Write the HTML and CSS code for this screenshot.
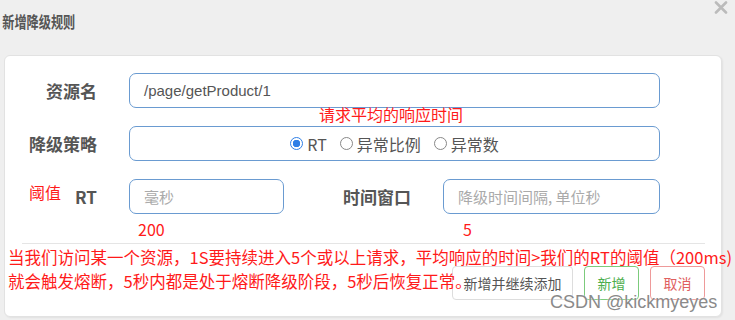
FILE: index.html
```html
<!DOCTYPE html>
<html lang="zh-CN">
<head>
    <meta charset="UTF-8">
    <title>新增降级规则</title>
    <link rel="stylesheet" href="styles.css">
</head>
<body>
    <div class="dialog">
        <div class="dialog-head">
            <h1>新增降级规则</h1>
            <svg class="close" width="14" height="13" viewBox="0 0 14 13">
                <path d="M2 1.5 L12 11.5 M12 1.5 L2 11.5" stroke="#bbb" stroke-width="2.6" stroke-linecap="round"/>
            </svg>
        </div>

        <div class="panel">
            <div class="form-row">
                <label class="label">资源名</label>
                <div class="input wide">/page/getProduct/1</div>
            </div>

            <div class="form-row">
                <label class="label">降级策略</label>
                <div class="input wide radios">
                    <span class="radio checked"></span><span class="radio-text">RT</span>
                    <span class="radio"></span><span class="radio-text">异常比例</span>
                    <span class="radio"></span><span class="radio-text">异常数</span>
                </div>
            </div>

            <div class="form-row">
                <label class="label">RT</label>
                <div class="input short placeholder">毫秒</div>
                <label class="label label-2">时间窗口</label>
                <div class="input medium placeholder">降级时间间隔, 单位秒</div>
            </div>

            <div class="divider"></div>

            <div class="actions">
                <button class="btn">新增并继续添加</button>
                <button class="btn btn-ok">新增</button>
                <button class="btn btn-cancel">取消</button>
            </div>

            <span class="note note-rt">请求平均的响应时间</span>
            <span class="note note-threshold">阈值</span>
            <span class="note note-200">200</span>
            <span class="note note-5">5</span>
        </div>

        <p class="note note-text">当我们访问某一个资源，1S要持续进入5个或以上请求，平均响应的时间&gt;我们的RT的阈值（200ms)<br>就会触发熔断，5秒内都是处于熔断降级阶段，5秒后恢复正常。</p>

        <span class="watermark">CSDN @kickmyeyes</span>
    </div>
</body>
</html>
```

FILE: styles.css
```css
body {
    margin: 0;
    background-color: #efefef;
    font-family: "Liberation Sans", "Noto Sans CJK SC", sans-serif;
    color: #555;
}

.dialog {
    position: relative;
    width: 735px;
    height: 320px;
    overflow: hidden;
}

.dialog-head {
    height: 55px;
    position: relative;
}

.dialog-head h1 {
    margin: 0;
    padding: 9px 0 0 3px;
    font-size: 16px;
    font-weight: bold;
    color: #555;
    font-family: "Noto Sans CJK SC", sans-serif;
    transform: scaleX(0.76);
    transform-origin: left center;
    white-space: nowrap;
}

.close {
    position: absolute;
    top: 1px;
    left: 714px;
}

.panel {
    position: relative;
    margin-left: 4px;
    width: 716px;
    padding: 17px 0 16px 0;
    background-color: #ffffff;
    border: 1px solid #e2e2e2;
    border-radius: 6px;
    box-shadow: 1px 1px 2px rgba(0, 0, 0, 0.06);
}

.form-row {
    display: flex;
    align-items: center;
    margin-bottom: 18px;
}

.label {
    width: 92px;
    margin-right: 32px;
    text-align: right;
    font-size: 17px;
    font-weight: bold;
    color: #555;
    font-family: "Noto Sans CJK SC", sans-serif;
}

.label-2 {
    width: 127px;
}

.input {
    box-sizing: border-box;
    height: 35px;
    border: 1px solid #6a9bd1;
    border-radius: 7px;
    padding: 0 14px;
    display: flex;
    align-items: center;
    font-size: 15px;
    color: #555;
}

.wide {
    width: 531px;
}

.short {
    width: 155px;
}

.medium {
    width: 217px;
}

.placeholder {
    color: #aaa;
    font-family: "Noto Sans CJK SC", sans-serif;
}

.radios {
    justify-content: center;
    font-family: "Noto Sans CJK SC", sans-serif;
}

.radio {
    box-sizing: border-box;
    width: 13px;
    height: 13px;
    border: 1px solid #888;
    border-radius: 50%;
    margin-right: 4px;
}

.radio.checked {
    border: 1px solid #2f7fe6;
    background: radial-gradient(circle, #2f7fe6 0, #2f7fe6 3.5px, #ffffff 4px);
}

.radio-text {
    margin-right: 13px;
    font-size: 16px;
}

.radio-text:last-child {
    margin-right: 0;
}

.divider {
    margin: 29px 16px 22px 17px;
    border-top: 1px solid #e5e5e5;
}

.actions {
    display: flex;
    justify-content: flex-end;
    gap: 11px;
    padding-right: 16px;
}

.btn {
    height: 34px;
    width: 121px;
    padding: 0;
    background-color: #ffffff;
    border: 1px solid #ddd;
    border-radius: 4px;
    font-size: 14px;
    color: #555;
    font-family: "Noto Sans CJK SC", sans-serif;
    white-space: nowrap;
}

.btn-ok {
    width: 55px;
    border-color: #7ccb7c;
    color: #4cae4c;
}

.btn-cancel {
    width: 55px;
    border-color: #ee9a9a;
    color: #e06060;
}

.note {
    position: absolute;
    color: #ff1a1a;
    font-size: 16px;
    font-family: "Noto Sans CJK SC", sans-serif;
    line-height: 20px;
}

.note-rt {
    left: 314px;
    top: 48px;
}

.note-threshold {
    left: 24px;
    top: 126px;
}

.note-200 {
    left: 133px;
    top: 163px;
}

.note-5 {
    left: 458px;
    top: 163px;
}

.note-text {
    margin: 0;
    left: 8px;
    top: 245px;
    font-size: 16.5px;
    line-height: 24px;
    white-space: nowrap;
}

.watermark {
    position: absolute;
    left: 550px;
    top: 292px;
    font-size: 18px;
    color: #8a8a8a;
    text-shadow: 0 0 2px #fff;
}
```
